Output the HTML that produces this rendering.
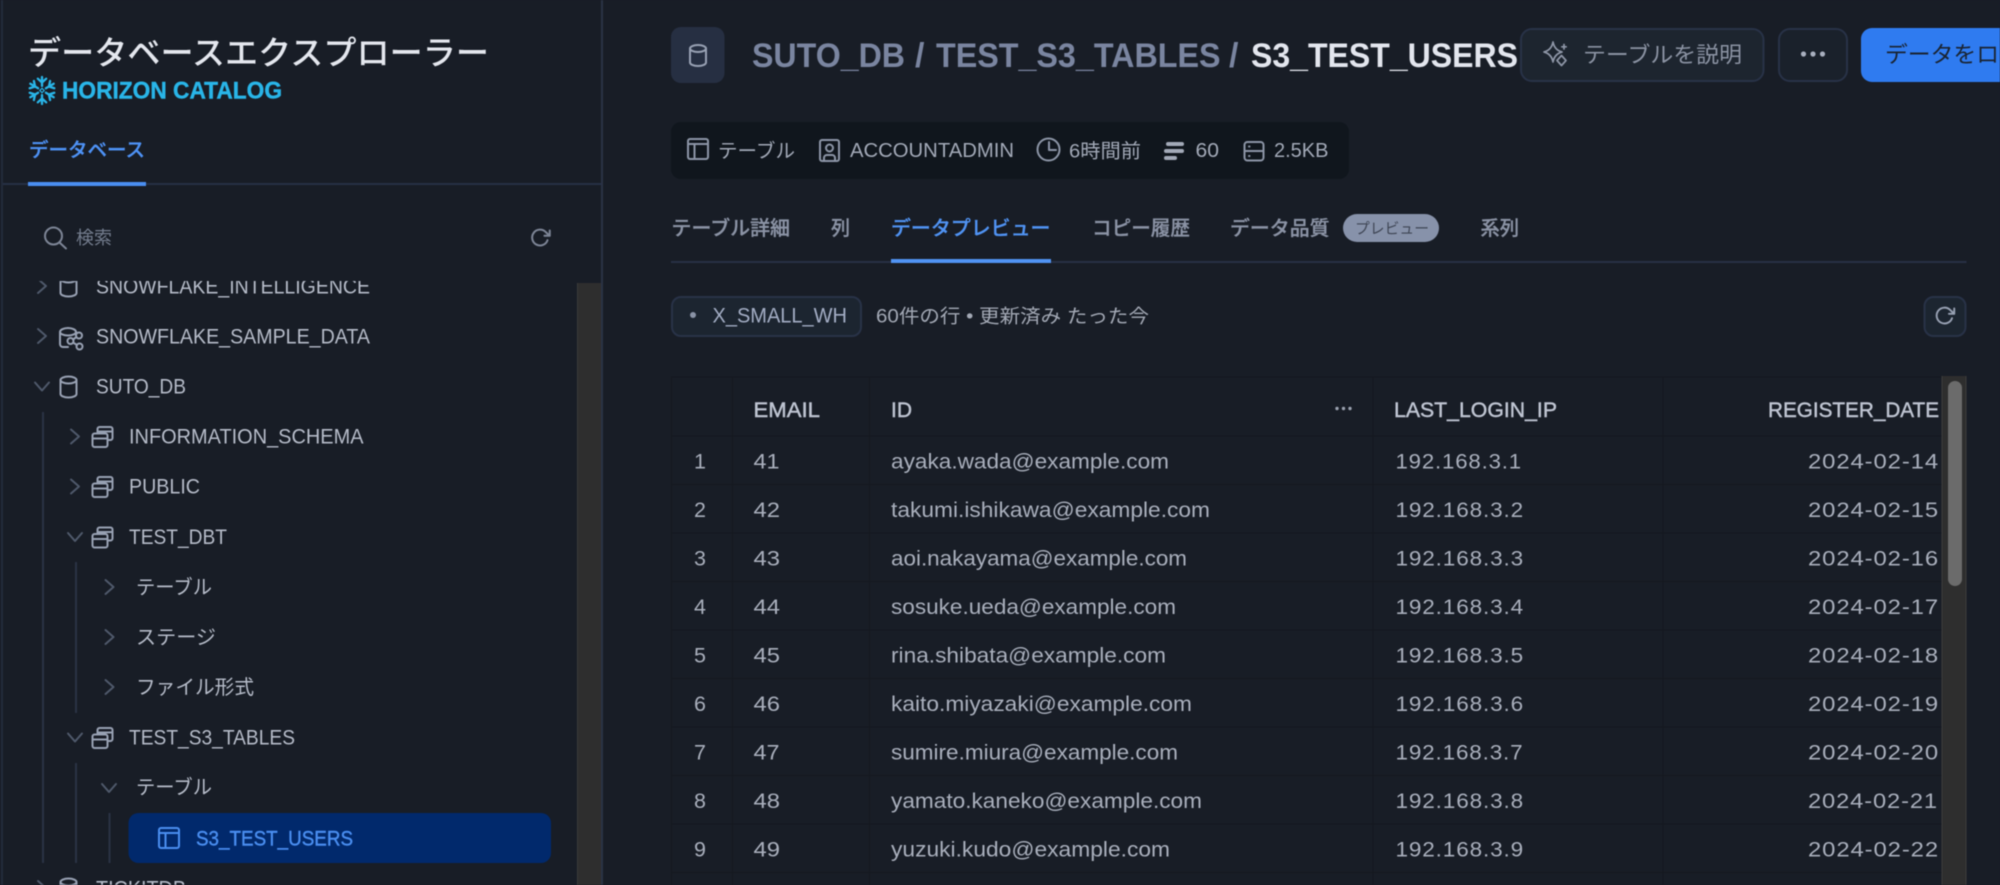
<!DOCTYPE html>
<html lang="ja">
<head>
<meta charset="utf-8">
<title>データベースエクスプローラー</title>
<style>
html,body{margin:0;padding:0;width:2000px;height:885px;overflow:hidden;background:#181d26}
svg{display:block;filter:blur(.45px)}
text{font-family:"Liberation Sans","Noto Sans CJK JP",sans-serif;white-space:pre}
.tree{font-size:21.5px;fill:#b6bcc9}
.treej{font-size:20px;fill:#b6bcc9}
.jp{font-family:"Noto Sans CJK JP","Liberation Sans",sans-serif}
.meta{font-size:20.5px;fill:#a2a9b7}
.metaj{font-size:19.5px;fill:#a2a9b7}
.tab{font-size:19.8px;fill:#8b93a5;font-weight:500;stroke:#8b93a5;stroke-width:.3}
.th{font-size:21.5px;fill:#bfc5d2;stroke:#bfc5d2;stroke-width:.45}
.td{font-size:21.5px;fill:#a9afbc}
.num{font-size:21.5px;fill:#a9afbc;letter-spacing:.8px}
.ic{fill:none;stroke:#98a1b3;stroke-width:2;stroke-linecap:round;stroke-linejoin:round}
.chev{fill:none;stroke:#4f596b;stroke-width:2;stroke-linecap:round;stroke-linejoin:round}
.guide{stroke:#2a3244;stroke-width:2}
.grid{stroke:#14181f;stroke-width:1}
</style>
</head>
<body>
<svg xmlns="http://www.w3.org/2000/svg" width="2000" height="885" viewBox="0 0 2000 885">
<defs>
<clipPath id="treeclip"><rect x="0" y="281" width="577" height="604"/></clipPath>
<path id="cr" d="M-4-7L4 0L-4 7"/>
<path id="cd" d="M-7-4L0 4L7-4"/>
<g id="db"><path d="M-8-7A8 3.5 0 0 1 8-7V7A8 3.5 0 0 1-8 7Z"/><path d="M-8-7A8 3.5 0 0 0 8-7"/></g>
<g id="schema"><path d="M-5-4V-8a2 2 0 0 1 2-2h11a2 2 0 0 1 2 2v9a2 2 0 0 1-2 2H5"/><path d="M-5-5.5H10"/><rect x="-10" y="-3.5" width="15" height="13.5" rx="2"/><path d="M-10 1.5H5"/></g>
<g id="table"><rect x="-10" y="-10" width="20" height="20" rx="2"/><path d="M-10-5H10M-3.5-5V10"/></g>
<path id="refresh" d="M20.49 15a9 9 0 1 1-2.12-9.36L23 10M23 4v6h-6"/>
<g id="arm"><path d="M0-4.5V-13.5M-4.2-11.8L0-8L4.2-11.8" fill="none" stroke="#29b5e8" stroke-width="2.3" stroke-linecap="round" stroke-linejoin="round"/></g>
</defs>

<!-- base -->
<rect width="2000" height="885" fill="#181d26"/>

<!-- sidebar -->
<rect x="1" y="0" width="2" height="885" fill="#232b3b"/>
<rect x="601" y="0" width="2" height="885" fill="#2a3244"/>
<text x="28" y="64.5" class="jp" font-size="33" font-weight="500" fill="#e4e7ee" textLength="461" lengthAdjust="spacingAndGlyphs">データベースエクスプローラー</text>

<g transform="translate(42 90.5)">
<use href="#arm"/><use href="#arm" transform="rotate(60)"/><use href="#arm" transform="rotate(120)"/><use href="#arm" transform="rotate(180)"/><use href="#arm" transform="rotate(240)"/><use href="#arm" transform="rotate(300)"/>
<path d="M0-2.2L2.2 0L0 2.2L-2.2 0Z" fill="none" stroke="#29b5e8" stroke-width="1.2"/>
</g>
<text x="62" y="98.5" font-size="24" font-weight="700" fill="#29b5e8" stroke="#29b5e8" stroke-width=".4" textLength="220" lengthAdjust="spacingAndGlyphs">HORIZON CATALOG</text>

<text x="29" y="156.5" class="jp" font-size="19.5" font-weight="500" fill="#4e92f5" stroke="#4e92f5" stroke-width=".3" textLength="116" lengthAdjust="spacingAndGlyphs">データベース</text>
<rect x="3" y="183" width="598" height="2" fill="#263045"/>
<rect x="28" y="182" width="118" height="4" fill="#4a8ef0"/>

<g class="ic" style="stroke:#7d8596">
<circle cx="53.5" cy="236" r="8.5"/><path d="M59.5 242.5L66 248.5"/>
</g>
<text x="76" y="244" class="jp" font-size="18" fill="#737c8d" textLength="36">検索</text>
<use href="#refresh" class="ic" style="stroke:#7d8596;stroke-width:2.3" transform="translate(529.5 227) scale(.88)"/>

<!-- sidebar scroll -->
<rect x="577" y="283" width="24" height="602" fill="#2e2e2e"/>
<rect x="577" y="283" width="1" height="602" fill="#3a3a3a"/>

<g clip-path="url(#treeclip)">
<line x1="43" y1="412" x2="43" y2="863" class="guide"/>
<line x1="76" y1="562" x2="76" y2="713" class="guide"/>
<line x1="76" y1="763" x2="76" y2="863" class="guide"/>
<line x1="109.5" y1="813" x2="109.5" y2="863" class="guide"/>

<use href="#cr" class="chev" x="42" y="286"/>
<use href="#db" class="ic" x="68.5" y="286"/>
<text x="96" y="293.5" class="tree" textLength="274" lengthAdjust="spacingAndGlyphs">SNOWFLAKE_INTELLIGENCE</text>

<use href="#cr" class="chev" x="42" y="336"/>
<g class="ic"><path d="M68 347H63a3 3 0 0 1-3-3V332a8 4 0 0 1 16 0v3"/><path d="M60 332a8 3.5 0 0 0 16 0"/><circle cx="70.5" cy="341" r="3"/><circle cx="79" cy="335.5" r="3"/><circle cx="79.5" cy="346.5" r="3"/><path d="M73 339.5L76.5 337M73 342.5L77 345"/></g>
<text x="96" y="343.5" class="tree" textLength="274" lengthAdjust="spacingAndGlyphs">SNOWFLAKE_SAMPLE_DATA</text>

<use href="#cd" class="chev" x="42" y="386.5"/>
<use href="#db" class="ic" x="68.5" y="387"/>
<text x="96" y="393.5" class="tree" textLength="90" lengthAdjust="spacingAndGlyphs">SUTO_DB</text>

<use href="#cr" class="chev" x="75" y="436.5"/>
<use href="#schema" class="ic" x="102.5" y="437"/>
<text x="129" y="443.5" class="tree" textLength="234.5" lengthAdjust="spacingAndGlyphs">INFORMATION_SCHEMA</text>

<use href="#cr" class="chev" x="75" y="486.5"/>
<use href="#schema" class="ic" x="102.5" y="487"/>
<text x="129" y="493.5" class="tree" textLength="71" lengthAdjust="spacingAndGlyphs">PUBLIC</text>

<use href="#cd" class="chev" x="75" y="537"/>
<use href="#schema" class="ic" x="102.5" y="537.5"/>
<text x="129" y="544" class="tree" textLength="98" lengthAdjust="spacingAndGlyphs">TEST_DBT</text>

<use href="#cr" class="chev" x="109.5" y="587"/>
<text x="136" y="594" class="treej jp" textLength="76" lengthAdjust="spacingAndGlyphs">テーブル</text>

<use href="#cr" class="chev" x="109.5" y="637"/>
<text x="136" y="644" class="treej jp" textLength="80" lengthAdjust="spacingAndGlyphs">ステージ</text>

<use href="#cr" class="chev" x="109.5" y="687"/>
<text x="136" y="694" class="treej jp" textLength="118" lengthAdjust="spacingAndGlyphs">ファイル形式</text>

<use href="#cd" class="chev" x="75" y="737.5"/>
<use href="#schema" class="ic" x="102.5" y="738"/>
<text x="129" y="744.5" class="tree" textLength="166" lengthAdjust="spacingAndGlyphs">TEST_S3_TABLES</text>

<use href="#cd" class="chev" x="109" y="788"/>
<text x="136" y="794" class="treej jp" textLength="76" lengthAdjust="spacingAndGlyphs">テーブル</text>

<rect x="128.5" y="813" width="422.5" height="50" rx="10" fill="#01296c"/>
<use href="#table" class="ic" style="stroke:#4a8ef0" x="169" y="838"/>
<text x="196" y="845.5" font-size="21.5" fill="#4a8ef0" stroke="#4a8ef0" stroke-width=".4" textLength="157" lengthAdjust="spacingAndGlyphs">S3_TEST_USERS</text>

<use href="#cr" class="chev" x="42" y="888"/>
<use href="#db" class="ic" x="68.5" y="889"/>
<text x="96" y="895.5" class="tree" textLength="90" lengthAdjust="spacingAndGlyphs">TICKITDB</text>
</g>

<!-- header -->
<rect x="671" y="27" width="53.5" height="56" rx="10" fill="#262f42"/>
<use href="#db" class="ic" style="stroke:#98a1b3" x="698" y="55.5"/>
<g font-size="34" font-weight="700" fill="#7a85a0">
<text x="752" y="67" textLength="153" lengthAdjust="spacingAndGlyphs">SUTO_DB</text>
<text x="915" y="67">/</text>
<text x="936" y="67" textLength="284.5" lengthAdjust="spacingAndGlyphs">TEST_S3_TABLES</text>
<text x="1229" y="67">/</text>
<text x="1251" y="67" fill="#e3e6ee" textLength="267" lengthAdjust="spacingAndGlyphs">S3_TEST_USERS</text>
</g>

<rect x="1521" y="29" width="242.5" height="52" rx="11" fill="#1d252f" stroke="#283247" stroke-width="2"/>
<g class="ic" style="stroke:#8f97a8;stroke-width:1.7">
<path d="M1553 42Q1554.5 50 1562 52Q1554.5 54 1553 62Q1551.5 54 1544 52Q1551.5 50 1553 42Z"/>
<path d="M1561.5 55.5L1566 60.5L1561.5 65.5L1557 60.5Z"/>
<path d="M1564 44.5V49M1561.8 46.8H1566.2"/>
</g>
<text x="1583" y="62.5" class="jp" font-size="22" fill="#8b93a3" textLength="159" lengthAdjust="spacingAndGlyphs">テーブルを説明</text>

<rect x="1779" y="29" width="68" height="52" rx="11" fill="#1a212b" stroke="#283247" stroke-width="2"/>
<g fill="#a9b0bf"><circle cx="1803.5" cy="54" r="2.6"/><circle cx="1813" cy="54" r="2.6"/><circle cx="1822.5" cy="54" r="2.6"/></g>

<rect x="1861" y="28" width="170" height="54" rx="11" fill="#2f7bf0"/>
<text x="1885" y="62.5" class="jp" font-size="22.8" fill="#1a2432">データをロード</text>

<!-- meta bar -->
<rect x="671" y="122" width="678" height="57" rx="10" fill="#10161d"/>
<use href="#table" class="ic" style="stroke:#8c95a6" x="698" y="149"/>
<text x="718" y="157.5" class="metaj jp" textLength="77" lengthAdjust="spacingAndGlyphs">テーブル</text>
<g class="ic" style="stroke:#8c95a6"><rect x="820" y="140" width="19" height="21" rx="2"/><circle cx="829.5" cy="148" r="3.5"/><path d="M824 161v-3a3 3 0 0 1 3-3h5a3 3 0 0 1 3 3v3"/></g>
<text x="850" y="157" class="meta" textLength="164" lengthAdjust="spacingAndGlyphs">ACCOUNTADMIN</text>
<g class="ic" style="stroke:#8c95a6"><circle cx="1048.5" cy="149.5" r="11"/><path d="M1049 142v8h7"/></g>
<text x="1069" y="157.5" class="metaj" textLength="72" lengthAdjust="spacingAndGlyphs">6時間前</text>
<g fill="#a2a9b7"><rect x="1166" y="142" width="18" height="4" rx="2"/><rect x="1164" y="149" width="20" height="4" rx="2"/><rect x="1164" y="156" width="13" height="4" rx="2"/></g>
<text x="1195.5" y="157" class="meta" textLength="23.5" lengthAdjust="spacingAndGlyphs">60</text>
<g class="ic" style="stroke:#8c95a6"><rect x="1244.5" y="142" width="19" height="18.5" rx="3"/><path d="M1244.5 151H1263.5M1249 146.5h.5M1249 156h.5"/></g>
<text x="1274" y="157" class="meta" textLength="54.5" lengthAdjust="spacingAndGlyphs">2.5KB</text>

<!-- tabs -->
<rect x="671" y="261" width="1295.5" height="2" fill="#273045"/>
<text x="671.5" y="235" class="tab jp" textLength="118.5" lengthAdjust="spacingAndGlyphs">テーブル詳細</text>
<text x="831" y="235" class="tab jp" textLength="19" lengthAdjust="spacingAndGlyphs">列</text>
<text x="891" y="235" class="tab jp" style="fill:#5093f3;stroke:#5093f3" textLength="159.5" lengthAdjust="spacingAndGlyphs">データプレビュー</text>
<rect x="891" y="259" width="160" height="4" fill="#5093f3"/>
<text x="1092" y="235" class="tab jp" textLength="98" lengthAdjust="spacingAndGlyphs">コピー履歴</text>
<text x="1230" y="235" class="tab jp" textLength="99.5" lengthAdjust="spacingAndGlyphs">データ品質</text>
<rect x="1343" y="214" width="96" height="28" rx="14" fill="#8792aa"/>
<text x="1355" y="233.5" class="jp" font-size="14.8" fill="#3f4655" textLength="74" lengthAdjust="spacingAndGlyphs">プレビュー</text>
<text x="1480.5" y="235" class="tab jp" textLength="38.5" lengthAdjust="spacingAndGlyphs">系列</text>

<!-- warehouse -->
<rect x="672" y="297" width="189" height="39" rx="9" fill="#1c2530" stroke="#283247" stroke-width="2"/>
<circle cx="693" cy="315" r="3" fill="#8a93a6"/>
<text x="712.5" y="322.5" font-size="21" fill="#a3adc4" textLength="134.5" lengthAdjust="spacingAndGlyphs">X_SMALL_WH</text>
<text x="876" y="322.5" font-size="19" fill="#a3a9b5" textLength="273" lengthAdjust="spacingAndGlyphs">60件の行 • 更新済み たった今</text>
<rect x="1924.5" y="297" width="41" height="39" rx="9" fill="#1c2530" stroke="#283247" stroke-width="2"/>
<use href="#refresh" class="ic" style="stroke:#98a1b3;stroke-width:2.2" transform="translate(1934 305) scale(.88)"/>

<!-- table grid -->
<g class="grid">
<line x1="671" y1="377" x2="1942" y2="377"/>
<line x1="671" y1="436" x2="1942" y2="436"/>
<line x1="671" y1="484.5" x2="1942" y2="484.5"/>
<line x1="671" y1="533" x2="1942" y2="533"/>
<line x1="671" y1="581.5" x2="1942" y2="581.5"/>
<line x1="671" y1="630" x2="1942" y2="630"/>
<line x1="671" y1="678.5" x2="1942" y2="678.5"/>
<line x1="671" y1="727" x2="1942" y2="727"/>
<line x1="671" y1="775.5" x2="1942" y2="775.5"/>
<line x1="671" y1="824" x2="1942" y2="824"/>
<line x1="671" y1="872.5" x2="1942" y2="872.5"/>
<line x1="671.5" y1="377" x2="671.5" y2="885"/>
<line x1="732.5" y1="377" x2="732.5" y2="885"/>
<line x1="869.5" y1="377" x2="869.5" y2="885"/>
<line x1="1373" y1="377" x2="1373" y2="885"/>
<line x1="1663" y1="377" x2="1663" y2="885"/>
</g>

<!-- table header -->
<text x="753.5" y="417" class="th" textLength="66.5" lengthAdjust="spacingAndGlyphs">EMAIL</text>
<text x="891" y="417" class="th" textLength="21" lengthAdjust="spacingAndGlyphs">ID</text>
<g fill="#9aa1af"><circle cx="1337" cy="408.5" r="1.7"/><circle cx="1343.5" cy="408.5" r="1.7"/><circle cx="1350" cy="408.5" r="1.7"/></g>
<text x="1394" y="417" class="th" textLength="163" lengthAdjust="spacingAndGlyphs">LAST_LOGIN_IP</text>
<text x="1768" y="417" class="th" textLength="171" lengthAdjust="spacingAndGlyphs">REGISTER_DATE</text>

<!-- rows -->
<text x="700" y="468.5" class="td" text-anchor="middle">1</text>
<text x="753.5" y="468.5" class="td" textLength="26" lengthAdjust="spacingAndGlyphs">41</text>
<text x="891" y="468.5" class="td" textLength="278" lengthAdjust="spacingAndGlyphs">ayaka.wada@example.com</text>
<text x="1395.5" y="468.5" class="num" textLength="126.5" lengthAdjust="spacingAndGlyphs">192.168.3.1</text>
<text x="1808" y="468.5" class="num" textLength="131" lengthAdjust="spacingAndGlyphs">2024-02-14</text>

<text x="700" y="517" class="td" text-anchor="middle">2</text>
<text x="753.5" y="517" class="td" textLength="26.5" lengthAdjust="spacingAndGlyphs">42</text>
<text x="891" y="517" class="td" textLength="319" lengthAdjust="spacingAndGlyphs">takumi.ishikawa@example.com</text>
<text x="1395.5" y="517" class="num" textLength="128.5" lengthAdjust="spacingAndGlyphs">192.168.3.2</text>
<text x="1808" y="517" class="num" textLength="131" lengthAdjust="spacingAndGlyphs">2024-02-15</text>

<text x="700" y="565.5" class="td" text-anchor="middle">3</text>
<text x="753.5" y="565.5" class="td" textLength="26.5" lengthAdjust="spacingAndGlyphs">43</text>
<text x="891" y="565.5" class="td" textLength="296" lengthAdjust="spacingAndGlyphs">aoi.nakayama@example.com</text>
<text x="1395.5" y="565.5" class="num" textLength="128.5" lengthAdjust="spacingAndGlyphs">192.168.3.3</text>
<text x="1808" y="565.5" class="num" textLength="131" lengthAdjust="spacingAndGlyphs">2024-02-16</text>

<text x="700" y="614" class="td" text-anchor="middle">4</text>
<text x="753.5" y="614" class="td" textLength="26.5" lengthAdjust="spacingAndGlyphs">44</text>
<text x="891" y="614" class="td" textLength="285" lengthAdjust="spacingAndGlyphs">sosuke.ueda@example.com</text>
<text x="1395.5" y="614" class="num" textLength="128.5" lengthAdjust="spacingAndGlyphs">192.168.3.4</text>
<text x="1808" y="614" class="num" textLength="131" lengthAdjust="spacingAndGlyphs">2024-02-17</text>

<text x="700" y="662.5" class="td" text-anchor="middle">5</text>
<text x="753.5" y="662.5" class="td" textLength="26.5" lengthAdjust="spacingAndGlyphs">45</text>
<text x="891" y="662.5" class="td" textLength="275" lengthAdjust="spacingAndGlyphs">rina.shibata@example.com</text>
<text x="1395.5" y="662.5" class="num" textLength="128.5" lengthAdjust="spacingAndGlyphs">192.168.3.5</text>
<text x="1808" y="662.5" class="num" textLength="131" lengthAdjust="spacingAndGlyphs">2024-02-18</text>

<text x="700" y="711" class="td" text-anchor="middle">6</text>
<text x="753.5" y="711" class="td" textLength="26.5" lengthAdjust="spacingAndGlyphs">46</text>
<text x="891" y="711" class="td" textLength="301" lengthAdjust="spacingAndGlyphs">kaito.miyazaki@example.com</text>
<text x="1395.5" y="711" class="num" textLength="128.5" lengthAdjust="spacingAndGlyphs">192.168.3.6</text>
<text x="1808" y="711" class="num" textLength="131" lengthAdjust="spacingAndGlyphs">2024-02-19</text>

<text x="700" y="759.5" class="td" text-anchor="middle">7</text>
<text x="753.5" y="759.5" class="td" textLength="26" lengthAdjust="spacingAndGlyphs">47</text>
<text x="891" y="759.5" class="td" textLength="287" lengthAdjust="spacingAndGlyphs">sumire.miura@example.com</text>
<text x="1395.5" y="759.5" class="num" textLength="128" lengthAdjust="spacingAndGlyphs">192.168.3.7</text>
<text x="1808" y="759.5" class="num" textLength="131" lengthAdjust="spacingAndGlyphs">2024-02-20</text>

<text x="700" y="808" class="td" text-anchor="middle">8</text>
<text x="753.5" y="808" class="td" textLength="26.5" lengthAdjust="spacingAndGlyphs">48</text>
<text x="891" y="808" class="td" textLength="311" lengthAdjust="spacingAndGlyphs">yamato.kaneko@example.com</text>
<text x="1395.5" y="808" class="num" textLength="128.5" lengthAdjust="spacingAndGlyphs">192.168.3.8</text>
<text x="1808" y="808" class="num" textLength="130" lengthAdjust="spacingAndGlyphs">2024-02-21</text>

<text x="700" y="856.5" class="td" text-anchor="middle">9</text>
<text x="753.5" y="856.5" class="td" textLength="26.5" lengthAdjust="spacingAndGlyphs">49</text>
<text x="891" y="856.5" class="td" textLength="279" lengthAdjust="spacingAndGlyphs">yuzuki.kudo@example.com</text>
<text x="1395.5" y="856.5" class="num" textLength="128.5" lengthAdjust="spacingAndGlyphs">192.168.3.9</text>
<text x="1808" y="856.5" class="num" textLength="131" lengthAdjust="spacingAndGlyphs">2024-02-22</text>

<!-- table scrollbar -->
<rect x="1941.5" y="376" width="25" height="509" fill="#2e2e2e"/>
<rect x="1941.5" y="376" width="1" height="509" fill="#3c3c3c"/>
<rect x="1965.5" y="376" width="1" height="509" fill="#3c3c3c"/>
<rect x="1948" y="381" width="14" height="205" rx="7" fill="#6b6b6b"/>
</svg>
</body>
</html>
